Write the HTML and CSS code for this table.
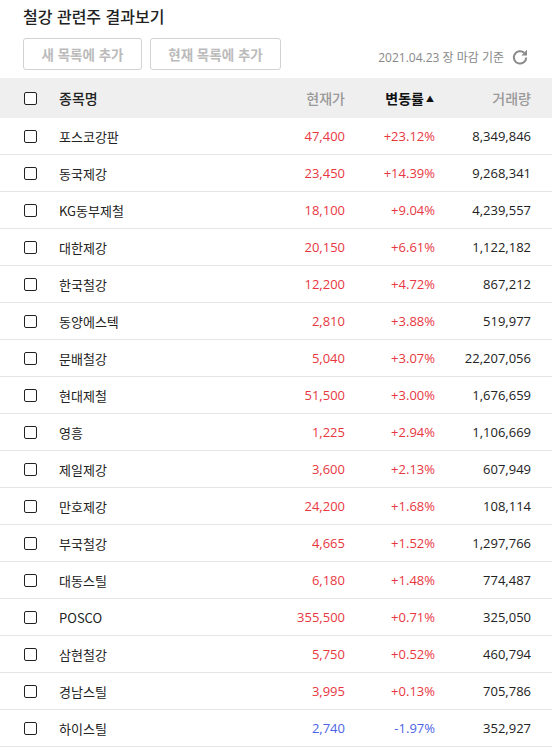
FILE: index.html
```html
<!DOCTYPE html>
<html lang="ko">
<head>
<meta charset="utf-8">
<link rel="stylesheet" href="styles.css">
</head>
<body>
<div class="page">
  <h1 class="title">철강 관련주 결과보기</h1>
  <div class="toolbar">
    <div class="btns">
      <button class="btn">새 목록에 추가</button>
      <button class="btn btn-wide">현재 목록에 추가</button>
    </div>
    <div class="asof">
      <span>2021.04.23 장 마감 기준</span>
      <svg class="refresh" width="18" height="18" viewBox="0 0 18 18"><path d="M15.2 9.4a6.2 6.2 0 1 1-2-4.6" fill="none" stroke="#8a8a8a" stroke-width="2"/><path d="M16 1.8v5.6h-5.6z" fill="#8a8a8a"/></svg>
    </div>
  </div>
  <div class="table">
    <div class="row head">
      <span class="cell chk"><span class="box"></span></span>
      <span class="cell name">종목명</span>
      <span class="cell num">현재가</span>
      <span class="cell num active">변동률<span class="tri">▲</span></span>
      <span class="cell num">거래량</span>
    </div>
    <div class="row"><span class="cell chk"><span class="box"></span></span><span class="cell name">포스코강판</span><span class="cell num up">47,400</span><span class="cell num up">+23.12%</span><span class="cell num">8,349,846</span></div>
    <div class="row"><span class="cell chk"><span class="box"></span></span><span class="cell name">동국제강</span><span class="cell num up">23,450</span><span class="cell num up">+14.39%</span><span class="cell num">9,268,341</span></div>
    <div class="row"><span class="cell chk"><span class="box"></span></span><span class="cell name">KG동부제철</span><span class="cell num up">18,100</span><span class="cell num up">+9.04%</span><span class="cell num">4,239,557</span></div>
    <div class="row"><span class="cell chk"><span class="box"></span></span><span class="cell name">대한제강</span><span class="cell num up">20,150</span><span class="cell num up">+6.61%</span><span class="cell num">1,122,182</span></div>
    <div class="row"><span class="cell chk"><span class="box"></span></span><span class="cell name">한국철강</span><span class="cell num up">12,200</span><span class="cell num up">+4.72%</span><span class="cell num">867,212</span></div>
    <div class="row"><span class="cell chk"><span class="box"></span></span><span class="cell name">동양에스텍</span><span class="cell num up">2,810</span><span class="cell num up">+3.88%</span><span class="cell num">519,977</span></div>
    <div class="row"><span class="cell chk"><span class="box"></span></span><span class="cell name">문배철강</span><span class="cell num up">5,040</span><span class="cell num up">+3.07%</span><span class="cell num">22,207,056</span></div>
    <div class="row"><span class="cell chk"><span class="box"></span></span><span class="cell name">현대제철</span><span class="cell num up">51,500</span><span class="cell num up">+3.00%</span><span class="cell num">1,676,659</span></div>
    <div class="row"><span class="cell chk"><span class="box"></span></span><span class="cell name">영흥</span><span class="cell num up">1,225</span><span class="cell num up">+2.94%</span><span class="cell num">1,106,669</span></div>
    <div class="row"><span class="cell chk"><span class="box"></span></span><span class="cell name">제일제강</span><span class="cell num up">3,600</span><span class="cell num up">+2.13%</span><span class="cell num">607,949</span></div>
    <div class="row"><span class="cell chk"><span class="box"></span></span><span class="cell name">만호제강</span><span class="cell num up">24,200</span><span class="cell num up">+1.68%</span><span class="cell num">108,114</span></div>
    <div class="row"><span class="cell chk"><span class="box"></span></span><span class="cell name">부국철강</span><span class="cell num up">4,665</span><span class="cell num up">+1.52%</span><span class="cell num">1,297,766</span></div>
    <div class="row"><span class="cell chk"><span class="box"></span></span><span class="cell name">대동스틸</span><span class="cell num up">6,180</span><span class="cell num up">+1.48%</span><span class="cell num">774,487</span></div>
    <div class="row"><span class="cell chk"><span class="box"></span></span><span class="cell name">POSCO</span><span class="cell num up">355,500</span><span class="cell num up">+0.71%</span><span class="cell num">325,050</span></div>
    <div class="row"><span class="cell chk"><span class="box"></span></span><span class="cell name">삼현철강</span><span class="cell num up">5,750</span><span class="cell num up">+0.52%</span><span class="cell num">460,794</span></div>
    <div class="row"><span class="cell chk"><span class="box"></span></span><span class="cell name">경남스틸</span><span class="cell num up">3,995</span><span class="cell num up">+0.13%</span><span class="cell num">705,786</span></div>
    <div class="row"><span class="cell chk"><span class="box"></span></span><span class="cell name">하이스틸</span><span class="cell num down">2,740</span><span class="cell num down">-1.97%</span><span class="cell num">352,927</span></div>
  </div>
</div>
</body>
</html>
```

FILE: styles.css
```css
* { box-sizing: border-box; }
html, body { margin: 0; padding: 0; background: #fff; }
body {
  font-family: "Open Sans", "Noto Sans CJK KR", sans-serif;
  font-size: 13px;
  color: #222;
}
.page { width: 552px; }
.title {
  margin: 0;
  padding: 5px 0 0 23px;
  height: 30px;
  font-family: "Noto Sans CJK KR", sans-serif;
  font-size: 16px;
  font-weight: 500;
  line-height: 22px;
  color: #222;
}
.toolbar {
  display: flex;
  align-items: flex-start;
  justify-content: space-between;
  padding: 8px 23px 0 23px;
  height: 48px;
}
.btns { display: flex; gap: 8px; }
.btn {
  height: 32px;
  width: 119px;
  border: 1px solid #d2d2d2;
  border-radius: 3px;
  background: #fff;
  color: #bbb;
  font-family: "Noto Sans CJK KR", sans-serif;
  font-size: 13.5px;
  font-weight: 700;
  padding: 0;
}
.btn-wide { width: 131px; }
.asof {
  display: flex;
  align-items: center;
  gap: 7px;
  margin-top: 9px;
  color: #888;
  font-size: 12px;
  height: 20px;
}
.refresh { display: block; }
.row {
  display: grid;
  grid-template-columns: 59px 1fr 90px 90px 96px;
  padding-right: 21px;
  height: 37px;
  align-items: center;
  border-bottom: 1px solid #e6e6e6;
}
.row.head {
  height: 40px;
  background: #efefef;
  border-bottom: none;
  color: #888;
  font-family: "Noto Sans CJK KR", sans-serif;
  font-size: 14px;
  font-weight: 500;
}
.cell { white-space: nowrap; }
.chk { padding-left: 24px; display: flex; align-items: center; }
.box {
  width: 13px;
  height: 13px;
  border: 1.5px solid #222;
  border-radius: 2px;
  background: #fff;
}
.name { font-family: "Noto Sans CJK KR", sans-serif; color: #222; }
.num { text-align: right; }
.head .num { color: #999; }
.head .active { color: #111; font-weight: 700; padding-right: 1px; }
.tri { font-size: 8px; margin-left: 2px; vertical-align: 2px; }
.up { color: #e8373f; }
.down { color: #4c63e6; }
```
